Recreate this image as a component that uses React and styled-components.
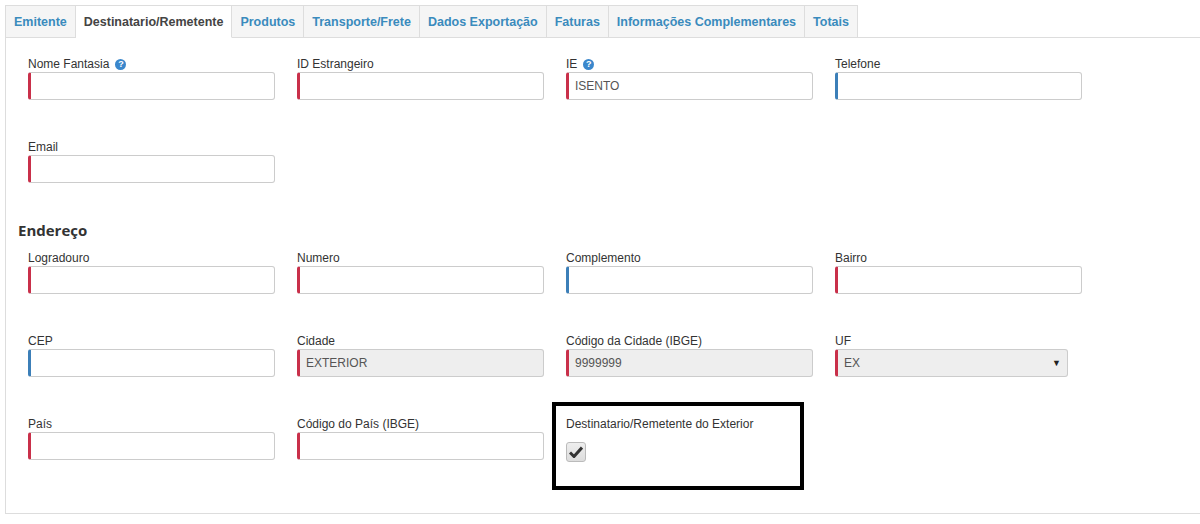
import React from "react";
import styled, { createGlobalStyle } from "styled-components";

const Global = createGlobalStyle`
  html, body { margin: 0; background: #fff; font-family: "Liberation Sans", Arial, sans-serif; }
`;

const Page = styled.div`
  padding: 5px 0 0 5px;
  width: 1195px;
`;
const Tabs = styled.div`
  display: flex;
  height: 33px;
  border-bottom: 1px solid #ddd;
  box-sizing: border-box;
`;
const Tab = styled.div`
  padding: 0 8px;
  display: flex;
  align-items: center;
  font-size: 12.5px;
  font-weight: bold;
  color: ${p => (p.$active ? "#444" : "#3a8bbd")};
  background: ${p => (p.$active ? "#fff" : "#f5f5f5")};
  border: 1px solid #ddd;
  border-left: ${p => (p.$first ? "1px solid #ddd" : "none")};
  border-bottom: ${p => (p.$active ? "1px solid #fff" : "1px solid #ddd")};
  height: 33px;
  box-sizing: border-box;
`;
const Panel = styled.div`
  border-left: 1px solid #ddd;
  border-bottom: 1px solid #ddd;
  height: 476px;
  padding: 17px 0 0 22px;
  box-sizing: border-box;
`;
const Grid = styled.div`
  display: grid;
  grid-template-columns: repeat(4, 247px);
  column-gap: 22px;
`;
const Field = styled.div`
  height: 83px;
  position: relative;
`;
const Label = styled.div`
  font-size: 12px;
  color: #333;
  height: 13px;
  line-height: 13px;
  margin-top: 3px;
  display: flex;
  align-items: center;
  gap: 6px;
`;
const Help = styled.span`
  width: 11px; height: 11px; border-radius: 50%;
  background: #3a87cc; color: #fff; font-size: 9px; font-weight: bold;
  display: inline-flex; align-items: center; justify-content: center;
`;
const Input = styled.div`
  position: absolute;
  top: 17px;
  height: 28px;
  width: ${p => p.$w || 247}px;
  box-sizing: border-box;
  border: 1px solid #ccc;
  border-left: 3px solid ${p => (p.$req ? "#c9304a" : "#3c7fb8")};
  border-radius: 3px;
  background: ${p => (p.$dis ? "#eee" : "#fff")};
  font-size: 12px;
  color: #555;
  padding: 0 6px;
  display: flex;
  align-items: center;
  justify-content: space-between;
`;
const Heading = styled.div`
  font-family: "Open Sans", sans-serif;
  font-weight: bold;
  font-size: 15px;
  color: #333;
  margin: -1px 0 0 -10px;
  height: 29px;
`;
const Highlight = styled.div`
  position: absolute;
  left: -14px;
  top: -13px;
  width: 252px;
  height: 88px;
  box-sizing: border-box;
  border: 4px solid #000;
`;
const Check = styled.div`
  position: absolute;
  top: 27px;
  width: 20px; height: 20px;
  box-sizing: border-box;
  border: 1px solid #bbb;
  border-radius: 3px;
  background: linear-gradient(#eee, #ddd);
  display: flex; align-items: center; justify-content: center;
`;

const F = ({ label, help, req, dis, value, w, select }) => (
  <Field>
    <Label>{label}{help && <Help>?</Help>}</Label>
    <Input $req={req} $dis={dis} $w={w}>
      <span>{value}</span>
      {select && <span style={{ fontSize: 9, color: "#222" }}>▼</span>}
    </Input>
  </Field>
);

export default function App() {
  const tabs = ["Emitente", "Destinatario/Remetente", "Produtos", "Transporte/Frete", "Dados Exportação", "Faturas", "Informações Complementares", "Totais"];
  return (
    <Page>
      <Global />
      <Tabs>
        {tabs.map((t, i) => (
          <Tab key={t} $first={i === 0} $active={i === 1}>{t}</Tab>
        ))}
      </Tabs>
      <Panel>
        <Grid>
          <F label="Nome Fantasia" help req />
          <F label="ID Estrangeiro" req />
          <F label="IE" help req value="ISENTO" />
          <F label="Telefone" />
          <F label="Email" req />
        </Grid>
        <Heading>Endereço</Heading>
        <Grid>
          <F label="Logradouro" req />
          <F label="Numero" req />
          <F label="Complemento" />
          <F label="Bairro" req />
          <F label="CEP" />
          <F label="Cidade" req dis value="EXTERIOR" />
          <F label="Código da Cidade (IBGE)" req dis value="9999999" />
          <F label="UF" req dis value="EX" w={233} select />
          <F label="País" req />
          <F label="Código do País (IBGE)" req />
          <Field>
            <Highlight />
            <Label>Destinatario/Remetente do Exterior</Label>
            <Check>
              <svg width="14" height="12" viewBox="0 0 14 12"><path d="M1 6.5 L5 10.5 L13 1.5" stroke="#333" strokeWidth="3" fill="none" /></svg>
            </Check>
          </Field>
        </Grid>
      </Panel>
    </Page>
  );
}
